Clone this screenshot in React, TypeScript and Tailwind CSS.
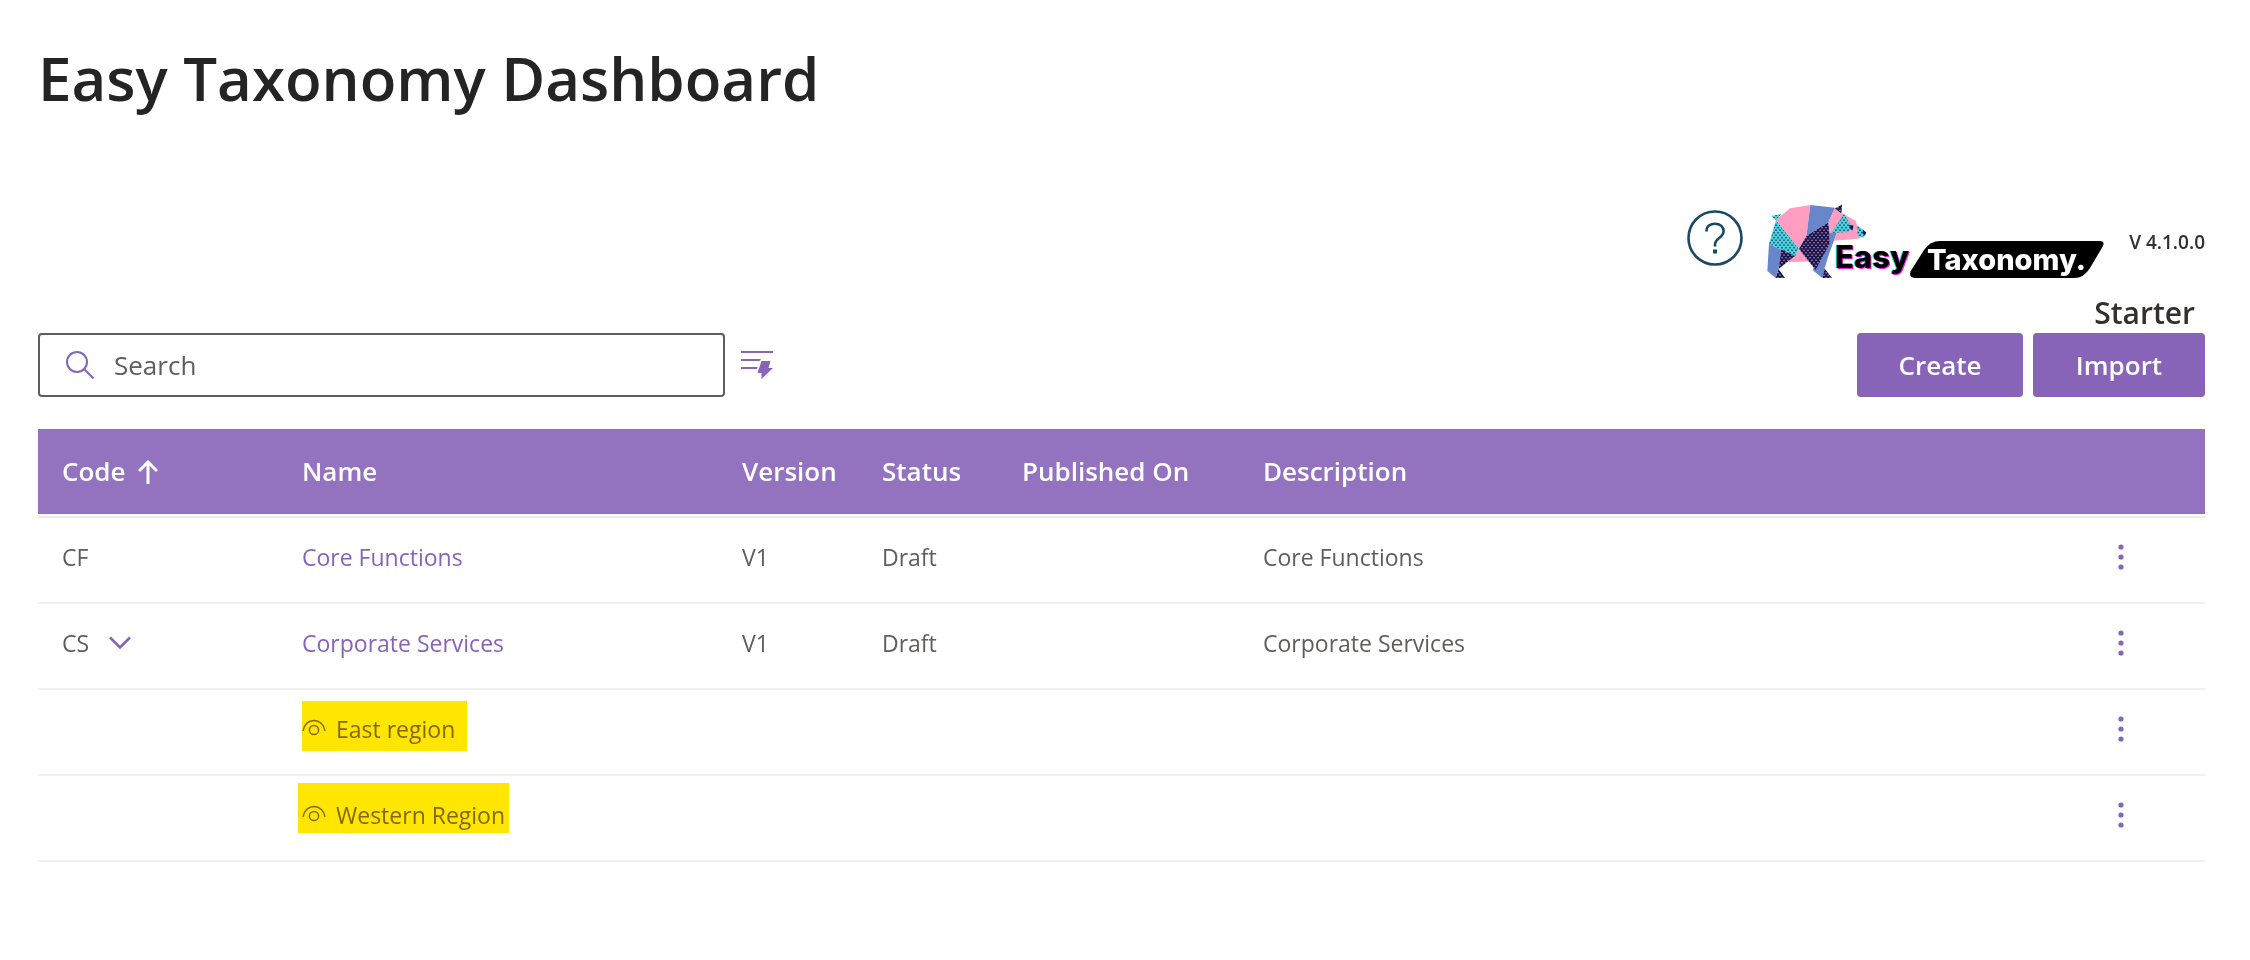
interface TaxonomyRow {
  code?: string;
  name: string;
  version?: string;
  status?: string;
  publishedOn?: string;
  description?: string;
  expandable?: boolean;
  highlight?: string;
}

const rows: TaxonomyRow[] = [
  {
    code: "CF",
    name: "Core Functions",
    version: "V1",
    status: "Draft",
    description: "Core Functions",
  },
  {
    code: "CS",
    name: "Corporate Services",
    version: "V1",
    status: "Draft",
    description: "Corporate Services",
    expandable: true,
  },
  { name: "East region", highlight: "left-0 -right-3 -top-3 h-[50px]" },
  { name: "Western Region", highlight: "-left-1 -right-1 -top-4 h-[50px]" },
];

const headers = ["Name", "Version", "Status", "Published On", "Description"];

function HelpIcon() {
  return (
    <svg width="56" height="56" viewBox="0 0 56 56" fill="none" stroke="#1b4965">
      <circle cx="28" cy="28" r="26.5" strokeWidth="2.6" />
      <path
        d="M19.500 21.500v-1c0-4 3.600-6.800 8.500-6.800 5 0 8.600 3 8.600 7.300 0 3.200-1.800 5-4.400 7-2.800 2.200-4.200 3.600-4.200 6.500v2"
        strokeWidth="2.6"
      />
      <rect x="26" y="39.500" width="4" height="4" fill="#1b4965" stroke="none" />
    </svg>
  );
}

function Logo() {
  return (
    <svg width="338" height="76" viewBox="0 0 338 76" role="img" aria-label="Easy Taxonomy">
      <defs>
        <pattern id="dots-navy" width="4" height="5" patternUnits="userSpaceOnUse">
          <rect width="4" height="5" fill="#17174f" />
          <circle cx="1" cy="1.200" r="0.800" fill="#d58cb4" />
          <circle cx="3" cy="3.700" r="0.800" fill="#d58cb4" />
        </pattern>
        <pattern id="dots-cyan" width="4" height="5" patternUnits="userSpaceOnUse">
          <rect width="4" height="5" fill="#4bd6dc" />
          <circle cx="1" cy="1.200" r="0.900" fill="#1c4a7c" />
          <circle cx="3" cy="3.700" r="0.900" fill="#1c4a7c" />
        </pattern>
      </defs>

      {/* bear */}
      <path d="M9 16 23 4.300 43.300 1 39.500 31.700 32 46 28 52 21 58 42 57.300 32 45Z" fill="#ff9ec0" />
      <path d="M32 45 28 52.300 21 58 43 57.300Z" fill="#ff9ec0" />
      <path d="M43.300 1 68 3.700 61.500 18.300 39.500 31.700Z" fill="#6a86cb" />
      <path d="M61.300 18.300 63 28.500H70L62 50 57.500 64.500 55.300 74 45.500 66 60 44Z" fill="#6a86cb" />
      <path d="M57.500 64.500 65 74H55.300Z" fill="url(#dots-navy)" />
      <path d="M61.500 18.300 39.500 31.700 32 45 48.500 66 62.500 40Z" fill="url(#dots-navy)" />
      <path d="M4.300 12 14.500 10 9 16.300Z" fill="url(#dots-cyan)" />
      <path d="M9 16.300 32 45 28 52.300 2 40Z" fill="url(#dots-cyan)" />
      <path d="M2 40 14.500 46 11.500 64.500 8.700 74 0.300 67Z" fill="#6a86cb" />
      <path d="M14.300 45.500 28 52 11.500 65Z" fill="url(#dots-navy)" />
      <path d="M11.500 65 18 74H8.700Z" fill="url(#dots-navy)" />
      <path d="M68 3.700 74.500 9 88.700 16.700 90.300 22 97 32.300 91 34.700 67 36.700 69.500 29H62.500L61.500 18.300Z" fill="#ff9ec0" />
      <path d="M68 4.500 75 0.500 74.500 9.500Z" fill="url(#dots-navy)" />
      <path d="M77 10 85.500 24 81.500 28 64.300 29Z" fill="url(#dots-cyan)" />
      <path d="M82 21 86.500 21.500 85.500 26.500 83.500 25Z" fill="#17174f" />
      <path d="M90.300 21.300 98.700 28 97 33.500 90.500 32.300Z" fill="url(#dots-cyan)" />
      <path d="M96 26 99.300 28.500 98 31.500 95.500 29Z" fill="#17174f" />

      {/* wordmark */}
      <g fontFamily="Inter, sans-serif" fontSize="31" fontWeight="800">
        <text x="67" y="64" fill="#22e6ee">Easy</text>
        <text x="69" y="65" fill="#f21be8">Easy</text>
        <text x="68" y="64" fill="#000">Easy</text>
      </g>
      <path
        d="M173 37H333Q338 37.500 336 42L323 64Q317 74 307 74H148Q141.500 73.500 143.500 67.500L157 46Q163 37 173 37Z"
        fill="#000"
      />
      <text x="160" y="66" fontFamily="Inter, sans-serif" fontSize="29" fontWeight="800" fill="#fff">
        Taxonomy.
      </text>
    </svg>
  );
}

function SearchIcon() {
  return (
    <svg width="28" height="28" viewBox="0 0 28 28" fill="none" stroke="#8764b8" strokeWidth="2" className="shrink-0">
      <circle cx="11" cy="11" r="10" />
      <path d="m18 18 9.500 9.500" />
    </svg>
  );
}

function QuickFilterIcon() {
  return (
    <svg width="32" height="30" viewBox="0 0 32 30" fill="#8764b8">
      <path d="M0 1h32v2H0zM0 9h20l-1.500 2H0zM0 17h16.500l-.5 2H0z" />
      <path d="M20.500 11h9l-2 7H32L20.500 29v-6h-4z" />
    </svg>
  );
}

function ArrowUpIcon() {
  return (
    <svg width="20" height="24" viewBox="0 0 20 24" fill="none" stroke="currentColor" strokeWidth="3">
      <path d="M10 24V2M1 11l9-9 9 9" />
    </svg>
  );
}

function ChevronIcon() {
  return (
    <svg width="22" height="14" viewBox="0 0 22 14" fill="none" stroke="currentColor" strokeWidth="2.600">
      <path d="m1 1.500 10 10 10-10" />
    </svg>
  );
}

function EyeIcon() {
  return (
    <svg width="24" height="20" viewBox="0 0 24 20" fill="none" stroke="currentColor" strokeWidth="1.500">
      <path d="M1 12C2 5.500 6.500 1.500 12 1.500S22 5.500 23 12" />
      <circle cx="12" cy="11" r="4.600" />
    </svg>
  );
}

function MoreIcon() {
  return (
    <svg width="6" height="26" viewBox="0 0 6 26" fill="#8764b8">
      <circle cx="3" cy="3" r="2.600" />
      <circle cx="3" cy="13" r="2.600" />
      <circle cx="3" cy="23" r="2.600" />
    </svg>
  );
}

function NameCell({ row }: { row: TaxonomyRow }) {
  if (!row.highlight) {
    return (
      <a href="#" className="text-[#8764b8]">
        {row.name}
      </a>
    );
  }

  return (
    <span className="relative inline-flex items-center gap-[10px] text-[#857420]">
      <EyeIcon />
      {row.name}
      <span className={`absolute bg-[#ffe600] mix-blend-multiply ${row.highlight}`} />
    </span>
  );
}

export default function App() {
  return (
    <main className="bg-white pt-[38px] pr-[45px] pl-[38px] font-['Open_Sans',sans-serif]">
      <h1 className="text-[60px] leading-[80px] font-semibold text-[#242424]">
        Easy Taxonomy Dashboard
      </h1>

      <div className="mt-[86px] flex items-center justify-end gap-6">
        <button type="button" aria-label="Help" className="mb-2">
          <HelpIcon />
        </button>
        <Logo />
        <span className="text-[19px] font-semibold text-[#323130]">V 4.1.0.0</span>
      </div>
      <p className="mt-[13px] pr-[10px] text-right text-[30px] leading-10 font-semibold text-[#323130]">
        Starter
      </p>

      <div className="flex items-center justify-between">
        <div className="flex items-center gap-4">
          <label className="flex h-16 w-[687px] items-center gap-5 rounded border-2 border-[#605e5c] px-[26px]">
            <SearchIcon />
            <input
              type="search"
              aria-label="Search"
              placeholder="Search"
              className="w-full text-[26px] text-[#605e5c] outline-none placeholder:text-[#605e5c]"
            />
          </label>
          <button type="button" aria-label="Quick filters">
            <QuickFilterIcon />
          </button>
        </div>
        <div className="flex gap-[10px] text-[26px] font-semibold text-white">
          <button type="button" className="h-16 w-[166px] rounded bg-[#8764b8]">
            Create
          </button>
          <button type="button" className="h-16 w-[172px] rounded bg-[#8764b8]">
            Import
          </button>
        </div>
      </div>

      <table className="mt-8 w-full table-fixed border-separate border-spacing-0 text-left">
        <colgroup>
          <col className="w-[240px]" />
          <col className="w-[440px]" />
          <col className="w-[140px]" />
          <col className="w-[140px]" />
          <col className="w-[241px]" />
          <col />
          <col className="w-[168px]" />
        </colgroup>
        <thead className="text-[26px] text-white">
          <tr>
            <th className="border-b-2 border-[#edebe9] p-0 pb-[2px] font-semibold">
              <div className="flex h-[85px] items-center gap-3 bg-[#9373c0] pl-6">
                Code
                <ArrowUpIcon />
              </div>
            </th>
            {headers.map((header) => (
              <th key={header} className="border-b-2 border-[#edebe9] p-0 pb-[2px] font-semibold">
                <div className="flex h-[85px] items-center bg-[#9373c0] pl-6">{header}</div>
              </th>
            ))}
            <th aria-label="Actions" className="border-b-2 border-[#edebe9] p-0 pb-[2px]">
              <div className="h-[85px] bg-[#9373c0]" />
            </th>
          </tr>
        </thead>
        <tbody className="text-[23px] leading-8 text-[#605e5c]">
          {rows.map((row) => (
            <tr
              key={row.name}
              className="h-[86px] *:border-b-2 *:border-[#f0f0f0] *:pb-[6px] *:pl-6"
            >
              <td>
                <span className="flex items-center gap-5">
                  {row.code}
                  {row.expandable && (
                    <button type="button" aria-label="Collapse" className="text-[#8764b8]">
                      <ChevronIcon />
                    </button>
                  )}
                </span>
              </td>
              <td>
                <NameCell row={row} />
              </td>
              <td>{row.version}</td>
              <td>{row.status}</td>
              <td>{row.publishedOn}</td>
              <td>{row.description}</td>
              <td>
                <button type="button" aria-label="More actions" className="mx-auto block pr-6">
                  <MoreIcon />
                </button>
              </td>
            </tr>
          ))}
        </tbody>
      </table>
    </main>
  );
}
